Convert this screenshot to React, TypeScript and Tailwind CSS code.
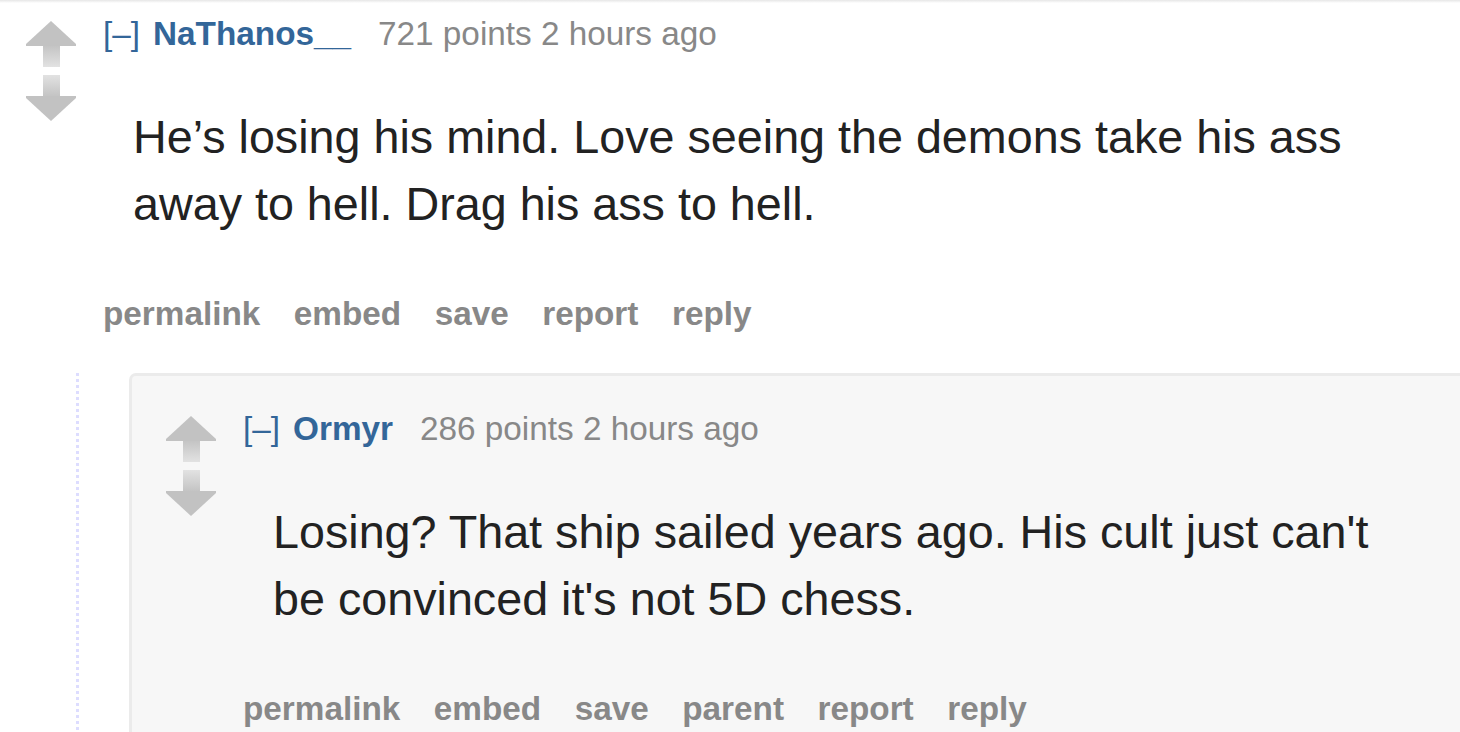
import React from 'react';

type CommentProps = {
  author: string;
  points: number;
  time: string;
  body: string;
  buttons: string[];
};

function UpArrow() {
  return (
    <svg width="50" height="46" viewBox="0 0 50 46">
      <defs>
        <linearGradient id="upStem" x1="0" y1="0" x2="0" y2="1">
          <stop offset="0" stopColor="#c4c4c4" />
          <stop offset="1" stopColor="#e2e2e2" />
        </linearGradient>
      </defs>
      <polygon points="25,0 50,23 50,25 0,25 0,23" fill="#c2c2c2" />
      <rect x="17" y="25" width="17" height="21" fill="url(#upStem)" />
    </svg>
  );
}

function DownArrow() {
  return (
    <svg width="50" height="46" viewBox="0 0 50 46">
      <defs>
        <linearGradient id="downStem" x1="0" y1="0" x2="0" y2="1">
          <stop offset="0" stopColor="#e2e2e2" />
          <stop offset="1" stopColor="#c4c4c4" />
        </linearGradient>
      </defs>
      <rect x="17" y="0" width="17" height="21" fill="url(#downStem)" />
      <polygon points="0,21 50,21 50,23 25,46 0,23" fill="#c2c2c2" />
    </svg>
  );
}

function Comment({ author, points, time, body, buttons }: CommentProps) {
  return (
    <div className="flex">
      <div className="mt-[7px] flex w-[50px] shrink-0 flex-col gap-[8px]">
        <UpArrow />
        <DownArrow />
      </div>
      <div className="ml-[27px] min-w-0 flex-1">
        <p className="whitespace-nowrap text-[33.3px] leading-[40px]">
          <span className="text-[#336699]">[–]</span>
          <span className="ml-[13px] font-bold text-[#336699]">{author}</span>
          <span className="ml-[27px] text-[#888888]">
            {points} points {time}
          </span>
        </p>
        <p className="ml-[30px] mt-[50px] pr-[40px] text-[46.7px] leading-[67px] text-[#222222]">{body}</p>
        <ul className="mt-[56px] flex gap-[33.5px] text-[33.3px] font-bold leading-[40px] text-[#888888]">
          {buttons.map((b) => (
            <li key={b}>{b}</li>
          ))}
        </ul>
      </div>
    </div>
  );
}

export default function App() {
  return (
    <div className="h-[732px] w-full overflow-hidden bg-white font-['Liberation_Sans',Arial,sans-serif]">
      <div className="h-[3px] bg-[linear-gradient(180deg,#e6e6e6,#ffffff)]" />
      <div className="pl-[26px] pt-[11px]">
        <Comment
          author="NaThanos__"
          points={721}
          time="2 hours ago"
          body="He’s losing his mind. Love seeing the demons take his ass away to hell. Drag his ass to hell."
          buttons={['permalink', 'embed', 'save', 'report', 'reply']}
        />
      </div>
      <div className="ml-[76px] mt-[39px] border-l-[3px] border-dotted border-[#ddddff] pl-[50px]">
        <div className="rounded-tl-[7px] rounded-bl-[7px] border-[3px] border-r-0 border-[#ebebeb] bg-[#f7f7f7] pb-[40px] pl-[34px] pt-[33px]">
          <Comment
            author="Ormyr"
            points={286}
            time="2 hours ago"
            body="Losing? That ship sailed years ago. His cult just can't be convinced it's not 5D chess."
            buttons={['permalink', 'embed', 'save', 'parent', 'report', 'reply']}
          />
        </div>
      </div>
    </div>
  );
}
